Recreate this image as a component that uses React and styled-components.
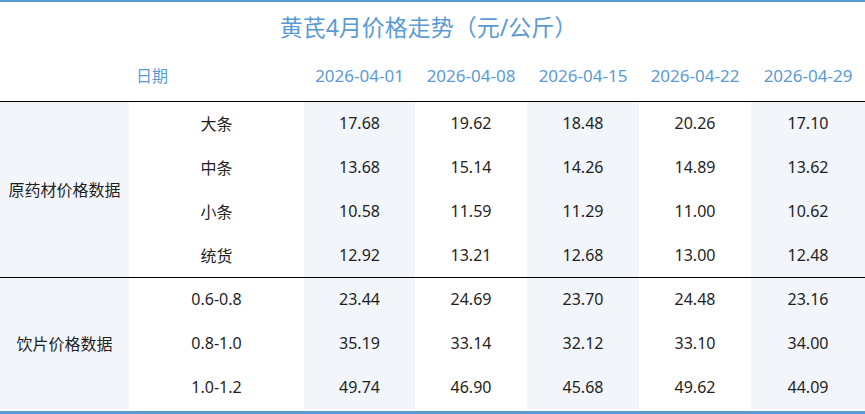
import React from "react";
import styled, {createGlobalStyle} from "styled-components";

const GlobalStyle = createGlobalStyle`
  html, body { margin: 0; padding: 0; background: #fff; }
  body { font-family: "Noto Sans", "Noto Sans CJK SC", sans-serif; }
`;

const dates = ["2026-04-01", "2026-04-08", "2026-04-15", "2026-04-22", "2026-04-29"];

const groups = [
    {
        name: "原药材价格数据",
        rows: [
            {label: "大条", values: ["17.68", "19.62", "18.48", "20.26", "17.10"]},
            {label: "中条", values: ["13.68", "15.14", "14.26", "14.89", "13.62"]},
            {label: "小条", values: ["10.58", "11.59", "11.29", "11.00", "10.62"]},
            {label: "统货", values: ["12.92", "13.21", "12.68", "13.00", "12.48"]},
        ],
    },
    {
        name: "饮片价格数据",
        rows: [
            {label: "0.6-0.8", values: ["23.44", "24.69", "23.70", "24.48", "23.16"]},
            {label: "0.8-1.0", values: ["35.19", "33.14", "32.12", "33.10", "34.00"]},
            {label: "1.0-1.2", values: ["49.74", "46.90", "45.68", "49.62", "44.09"]},
        ],
    },
];

const colWidths = [129, 175, 111, 112, 112, 112, 114];

const App = () => {
    return (
        <>
            <GlobalStyle />
            <StyledWrapper>
                <Title>黄芪4月价格走势（元/公斤）</Title>
                <Table>
                    <colgroup>
                        {colWidths.map((w, i) => <col key={i} style={{width: w}} />)}
                    </colgroup>
                    <thead>
                        <HeadRow>
                            <HeadCell colSpan={2}>日期</HeadCell>
                            {dates.map(d => <HeadCell key={d}>{d}</HeadCell>)}
                        </HeadRow>
                    </thead>
                    {groups.map(g => (
                        <Section key={g.name}>
                            {g.rows.map((r, ri) => (
                                <BodyRow key={r.label}>
                                    {ri === 0 && <GroupCell rowSpan={g.rows.length}>{g.name}</GroupCell>}
                                    <Cell>{r.label}</Cell>
                                    {r.values.map((v, vi) => (
                                        <Cell key={vi} $shaded={vi % 2 === 0}>{v}</Cell>
                                    ))}
                                </BodyRow>
                            ))}
                        </Section>
                    ))}
                </Table>
            </StyledWrapper>
        </>
    );
};

const StyledWrapper = styled.div`
  width: 865px; height: 414px;
  box-sizing: border-box;
  border-top: 2px solid #5b9bd5;
  border-bottom: 3px solid #5b9bd5;
  overflow: hidden;
`;

const Title = styled.div`
  height: 48px;
  display: flex;
  align-items: center;
  justify-content: center;
  color: #5b9bd5;
  font-size: 23px;
  padding-right: 8px;
`;

const Table = styled.table`
  width: 865px;
  table-layout: fixed;
  border-collapse: collapse;
  border-spacing: 0;
  font-size: 16px;
  color: #1f1f1f;
`;

const HeadRow = styled.tr`
  height: 51px;
  border-bottom: 1px solid #000;
`;

const HeadCell = styled.th`
  padding: 0;
  font-weight: normal;
  color: #5b9bd5;
  font-size: 17px;
  text-align: center;
  vertical-align: middle;
  &:first-child { font-size: 16px; }
`;

const Section = styled.tbody`
  border-bottom: 1px solid #000;
  &:last-of-type { border-bottom: none; }
`;

const BodyRow = styled.tr`
  height: 44px;
`;

const Cell = styled.td`
  padding: 0;
  text-align: center;
  vertical-align: middle;
  background: ${p => p.$shaded ? "#f2f5fa" : "#fff"};
`;

const GroupCell = styled(Cell)`
  background: #f2f5fa;
`;

export default App;
